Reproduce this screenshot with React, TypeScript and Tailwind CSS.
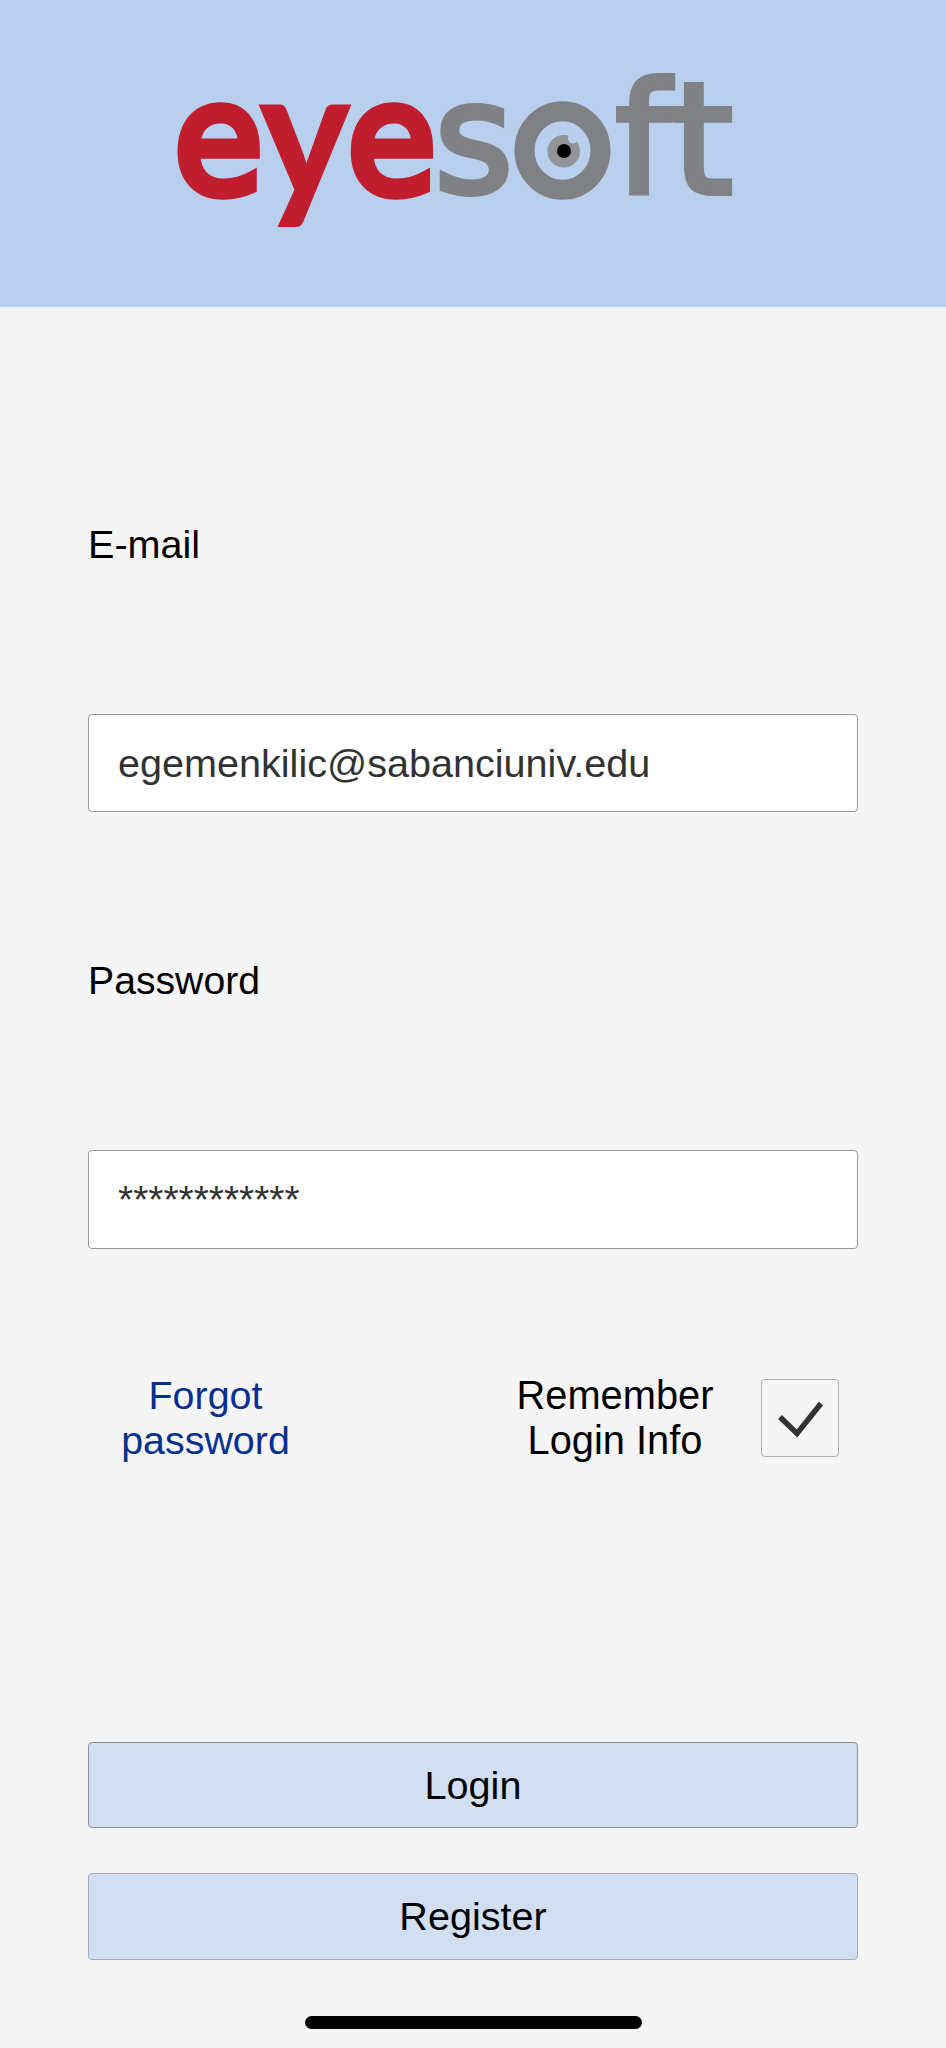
import { useState } from "react";

function Logo() {
  return (
    <svg className="block h-[307px] w-[946px]" viewBox="0 0 946 307" role="img" aria-label="eyesoft">
      <g fill="#c01e2e" stroke="#c01e2e" strokeWidth="9.5" fontFamily="'DejaVu Sans'" fontSize="154">
        <text transform="translate(174.1 192.8) scale(0.94 1)">e</text>
        <text transform="translate(258.5 197) scale(0.965 1)" fontFamily="Lato" fontWeight="900" fontSize="180" strokeWidth="0">y</text>
        <text transform="translate(347.3 192.8) scale(0.94 1)">e</text>
      </g>
      <g fill="#808184" stroke="#808184" strokeWidth="6" fontFamily="'DejaVu Sans'" fontSize="153">
        <text transform="translate(434.6 192.4) scale(0.985 1)">s</text>
        <text x="615.5" y="192.6">f</text>
        <text x="672.8" y="192.6">t</text>
      </g>
      <path d="M668 114.2H690" stroke="#808184" strokeWidth="16.5" />
      <ellipse cx="562.5" cy="150.5" rx="38" ry="39.3" fill="none" stroke="#808184" strokeWidth="20" />
      <circle cx="563.7" cy="151.3" r="16.3" fill="#929497" />
      <circle cx="573" cy="138.5" r="5" fill="#b8d0ee" />
      <circle cx="564" cy="151" r="7" fill="#000" />
    </svg>
  );
}

export default function App() {
  const [email, setEmail] = useState("egemenkilic@sabanciuniv.edu");
  return (
    <main className="flex h-[2048px] w-[946px] flex-col bg-[#f5f5f5] font-['Liberation_Sans',sans-serif] text-[39.6px] leading-[45px] text-black">
      <header className="h-[307px] shrink-0 bg-[#b8d0ee]">
        <Logo />
      </header>
      <form className="flex flex-col px-[88px] pt-[215px]" onSubmit={(e) => e.preventDefault()}>
        <label htmlFor="email">E-mail</label>
        <input
          id="email"
          value={email}
          onChange={(e) => setEmail(e.target.value)}
          className="mt-[147px] h-[98px] rounded-[4px] border border-[#999999] bg-white px-[29px] text-[#323232] outline-none"
        />
        <label htmlFor="password" className="mt-[146px] text-[39.2px]">Password</label>
        <div id="password" className="mt-[147px] flex h-[99px] items-center rounded-[4px] border border-[#999999] bg-white px-[29px] pb-px text-[38.9px] text-[#323232]">
          ************
        </div>
        <div className="mt-[124px] flex h-[90px]">
          <a className="w-[235px] text-center text-[39.4px] text-[#05308f]">Forgot<br />password</a>
          <span className="ml-[174px] w-[236px] text-center text-[39.8px]">Remember<br />Login Info</span>
          <span className="mt-[6px] ml-[28px] h-[78px] w-[78px] rounded-[4px] border border-[#b0b0b0]">
            <svg className="block h-[76px] w-[76px]" viewBox="0 0 76 76" fill="none" stroke="#323232" strokeWidth="5.5">
              <path d="M18 37 35 53.5 59 23.5" />
            </svg>
          </span>
        </div>
        <button className="mt-[279px] h-[86px] rounded-[4px] border border-[#8a909c] bg-[#d2dff2]">Login</button>
        <button className="mt-[45px] h-[87px] rounded-[4px] border border-[#a0a9b8] bg-[#d2dff2]">Register</button>
      </form>
      <div className="mt-[56px] ml-[305px] h-[13px] w-[337px] rounded-full bg-black" />
    </main>
  );
}
